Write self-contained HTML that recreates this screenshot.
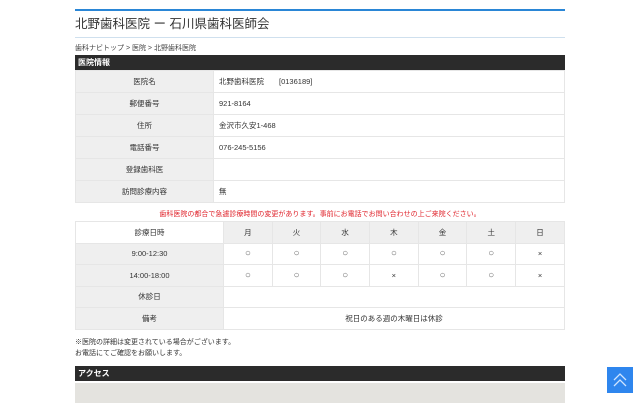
<!DOCTYPE html>
<html><head><meta charset="utf-8"><style>
body{margin:0;background:#fff;font-family:"Liberation Sans","Noto Sans CJK JP",sans-serif;color:#333;width:640px;height:400px;overflow:hidden;position:relative}
.w{position:absolute;left:75px;width:490px}
.bl{top:9px;height:2px;background:#2a86d6}
.t{top:15px;font-size:12.5px;color:#333;line-height:18px}
.ul{top:37px;height:1px;background:#cfe0ee}
.bc{top:44px;font-size:7px;line-height:10px;color:#444}
.bar{height:15px;background:#2b2b2b;color:#fff;font-size:8px;font-weight:bold;line-height:15px;padding-left:3px;box-sizing:border-box}
table{border-collapse:collapse;width:490px;font-size:7.5px}
td{border:1px solid #e6e6e6;padding:0;text-align:center}
.g{background:#efefef}
.info td{height:21px}
.info td.v{text-align:left;padding-left:5px}
.s td{height:20.5px}
.c{font-size:10px;color:#666}
.red{top:209px;width:490px;text-align:center;color:#e0242c;font-size:7px}
.n{top:337px;font-size:7px;line-height:11px}
.map{top:383px;height:20px;background:#e4e3df}
.top{position:absolute;left:607px;top:367px;width:26px;height:26px;background:#2f86ee}
</style></head><body>
<div class="w bl"></div>
<div class="w t">北野歯科医院 ー 石川県歯科医師会</div>
<div class="w ul"></div>
<div class="w bc">歯科ナビトップ &gt; 医院 &gt; 北野歯科医院</div>
<div class="w bar" style="top:55px">医院情報</div>
<div class="w" style="top:70px"><table class="info">
<tr><td class="g" style="width:137px">医院名</td><td class="v">北野歯科医院　　[0136189]</td></tr>
<tr><td class="g">郵便番号</td><td class="v">921-8164</td></tr>
<tr><td class="g">住所</td><td class="v">金沢市久安1-468</td></tr>
<tr><td class="g">電話番号</td><td class="v">076-245-5156</td></tr>
<tr><td class="g">登録歯科医</td><td class="v"></td></tr>
<tr><td class="g">訪問診療内容</td><td class="v">無</td></tr>
</table></div>
<div class="w red">歯科医院の都合で急遽診療時間の変更があります。事前にお電話でお問い合わせの上ご来院ください。</div>
<div class="w" style="top:221px"><table class="s">
<tr><td style="width:147px">診療日時</td><td class="g">月</td><td class="g">火</td><td class="g">水</td><td class="g">木</td><td class="g">金</td><td class="g">土</td><td class="g">日</td></tr>
<tr><td class="g">9:00-12:30</td><td class="c">○</td><td class="c">○</td><td class="c">○</td><td class="c">○</td><td class="c">○</td><td class="c">○</td><td>×</td></tr>
<tr><td class="g">14:00-18:00</td><td class="c">○</td><td class="c">○</td><td class="c">○</td><td>×</td><td class="c">○</td><td class="c">○</td><td>×</td></tr>
<tr><td class="g">休診日</td><td colspan="7"></td></tr>
<tr><td class="g">備考</td><td colspan="7">祝日のある週の木曜日は休診</td></tr>
</table></div>
<div class="w n">※医院の詳細は変更されている場合がございます。<br>お電話にてご確認をお願いします。</div>
<div class="w bar" style="top:366px">アクセス</div>
<div class="w map"></div>
<div class="top"><svg width="26" height="26"><path d="M7 13l6-6 6 6M7 19l6-6 6 6" fill="none" stroke="#cfe4ff" stroke-width="1.3"/></svg></div>
</body></html>
